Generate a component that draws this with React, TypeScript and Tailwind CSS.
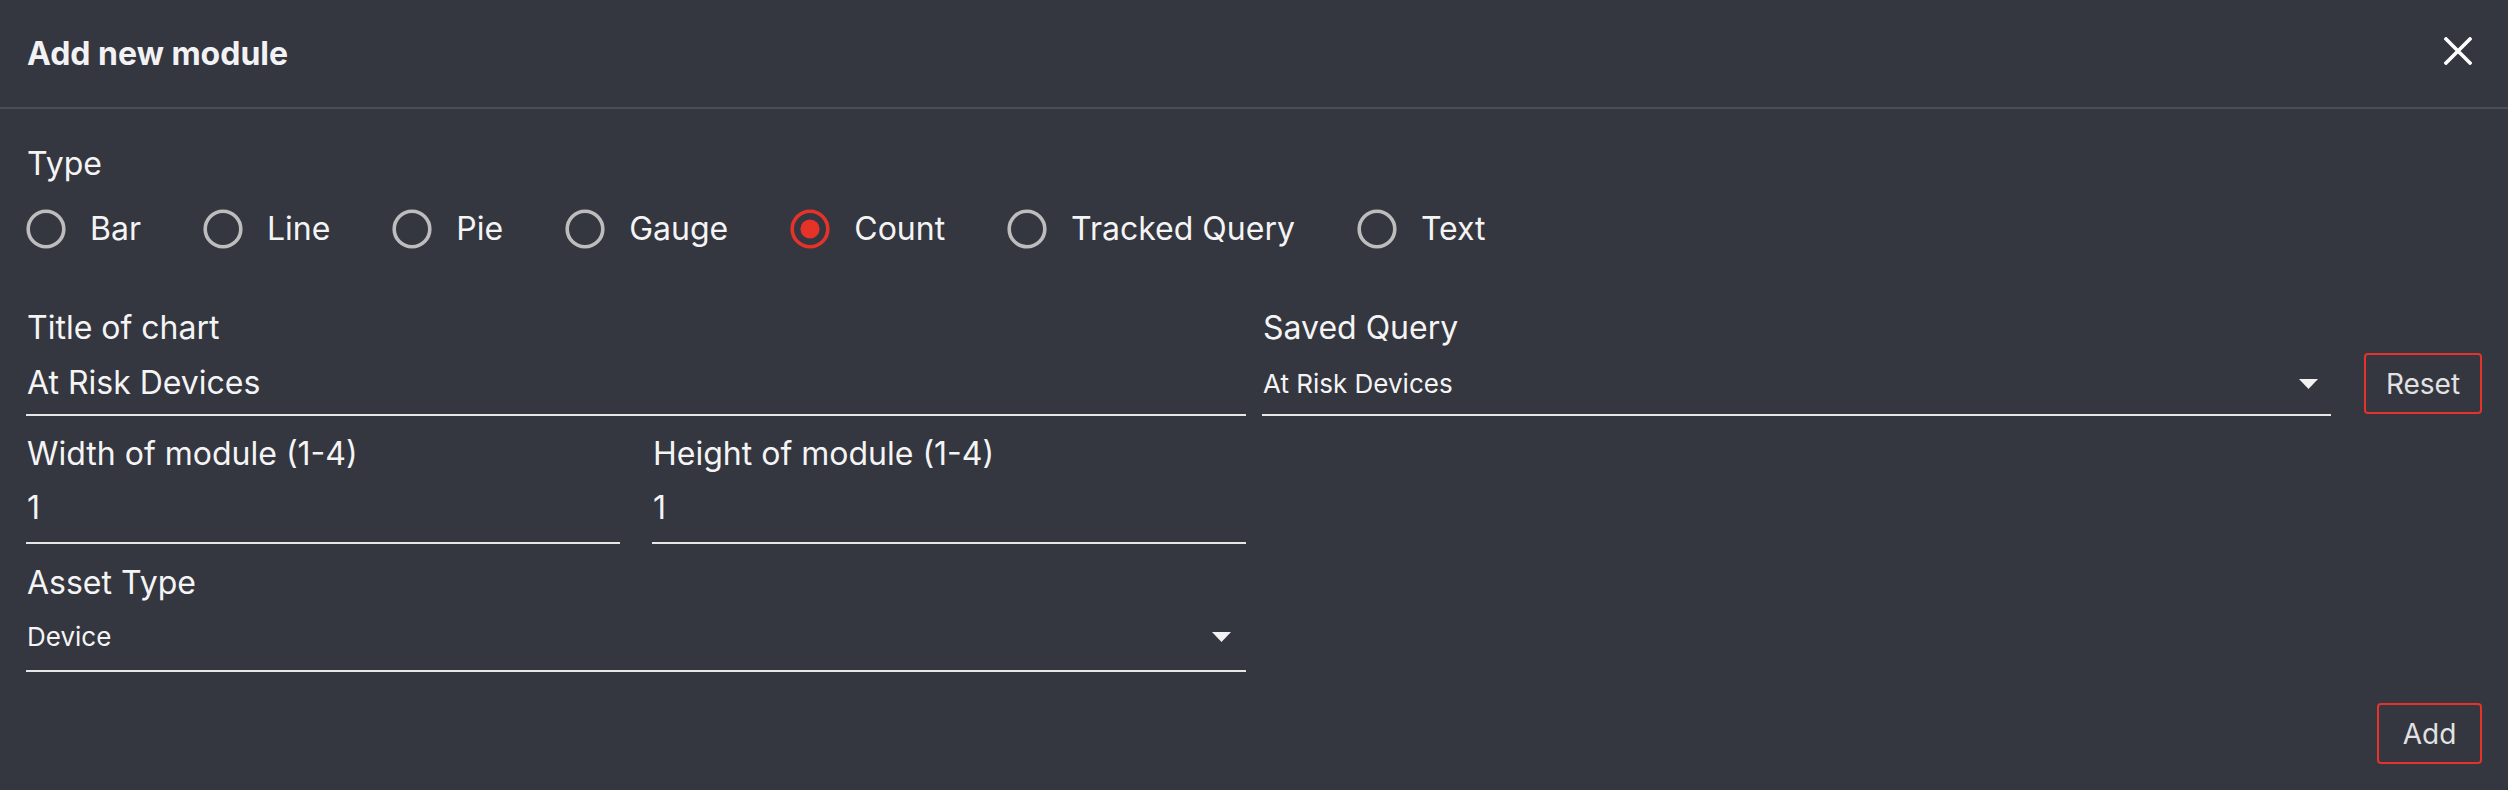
import React from "react";

const types = ["Bar", "Line", "Pie", "Gauge", "Count", "Tracked Query", "Text"];

function RadioIcon({ checked }: { checked: boolean }) {
  return (
    <svg width="40" height="40" viewBox="0 0 40 40" className="shrink-0">
      <circle cx="20" cy="20" r="17.8" fill="none" stroke={checked ? "#e5332a" : "#bdbdbd"} strokeWidth="3.6" />
      {checked && <circle cx="20" cy="20" r="9.6" fill="#e5332a" />}
    </svg>
  );
}

function Caret() {
  return (
    <svg width="19" height="10" viewBox="0 0 19 10" className="shrink-0">
      <path d="M0 0 L19 0 L9.5 10 Z" fill="#f2f2f2" />
    </svg>
  );
}

const App: React.FC = () => {
  return (
    <div className="w-[2508px] h-[790px] bg-[#343640] text-[#f4f4f4] font-['Inter','Noto_Sans',sans-serif] overflow-hidden">
      <header className="flex h-[109px] items-center justify-between border-b-2 border-[#4a4d57] pl-[27px] pr-[36px]">
        <h2 className="text-[32px] leading-[38px] font-bold text-[#f2f2f4]">Add new module</h2>
        <svg width="28" height="28" viewBox="0 0 28 28" className="mb-[5px]">
          <path d="M2 2 L26 26 M26 2 L2 26" stroke="#ffffff" strokeWidth="3.6" strokeLinecap="square" />
        </svg>
      </header>

      <div className="px-[26px]">
        <div className="pt-[37px] text-[32px] leading-[36px] pl-[1px]">Type</div>
        <div className="mt-[27px] flex h-[40px] items-center gap-[62px]">
          {types.map(t => (
            <div key={t} className="flex items-center gap-[24px]">
              <RadioIcon checked={t === "Count"} />
              <span className="text-[32px] leading-[40px]">{t}</span>
            </div>
          ))}
        </div>

        <div className="mt-[61px] grid grid-cols-2 gap-x-4">
          <div className="flex flex-col">
            <div>
              <div className="text-[32px] leading-[36px] pl-[1px]">Title of chart</div>
              <div className="mt-[19px] border-b-2 border-[#e6e6e6] pb-[13px] text-[32px] leading-[36px] pl-[1px]">At Risk Devices</div>
            </div>
            <div className="mt-[20px] grid grid-cols-2 gap-8">
              <div>
                <div className="text-[32px] leading-[36px] pl-[1px]">Width of module (1-4)</div>
                <div className="mt-[18px] border-b-2 border-[#e6e6e6] pb-[16px] text-[32px] leading-[36px] pl-[1px]">1</div>
              </div>
              <div>
                <div className="text-[32px] leading-[36px] pl-[1px]">Height of module (1-4)</div>
                <div className="mt-[18px] border-b-2 border-[#e6e6e6] pb-[16px] text-[32px] leading-[36px] pl-[1px]">1</div>
              </div>
            </div>
            <div className="mt-[21px]">
              <div className="text-[32px] leading-[36px] pl-[1px]">Asset Type</div>
              <div className="mt-[21px] flex items-center justify-between border-b-2 border-[#e6e6e6] pb-[18px] pr-[15px]">
                <span className="text-[26px] leading-[30px] pl-[1px]">Device</span>
                <Caret />
              </div>
            </div>
          </div>

          <div className="flex flex-col">
            <div className="text-[32px] leading-[36px] pl-[1px]">Saved Query</div>
            <div className="flex items-end gap-[33px]">
              <div className="mt-[23px] flex flex-1 items-center justify-between border-b-2 border-[#e6e6e6] pb-[15px] pr-[13px]">
                <span className="text-[26px] leading-[30px] pl-[1px]">At Risk Devices</span>
                <Caret />
              </div>
              <button className="mb-[2px] h-[61px] w-[118px] rounded-[4px] border-2 border-[#e5332a] text-[28px] text-[#e2e2e2]">
                Reset
              </button>
            </div>
          </div>
        </div>

        <div className="mt-[31px] flex justify-end">
          <button className="h-[61px] w-[105px] rounded-[4px] border-2 border-[#e5332a] text-[28px] text-[#e2e2e2]">
            Add
          </button>
        </div>
      </div>
    </div>
  );
};

export default App;
